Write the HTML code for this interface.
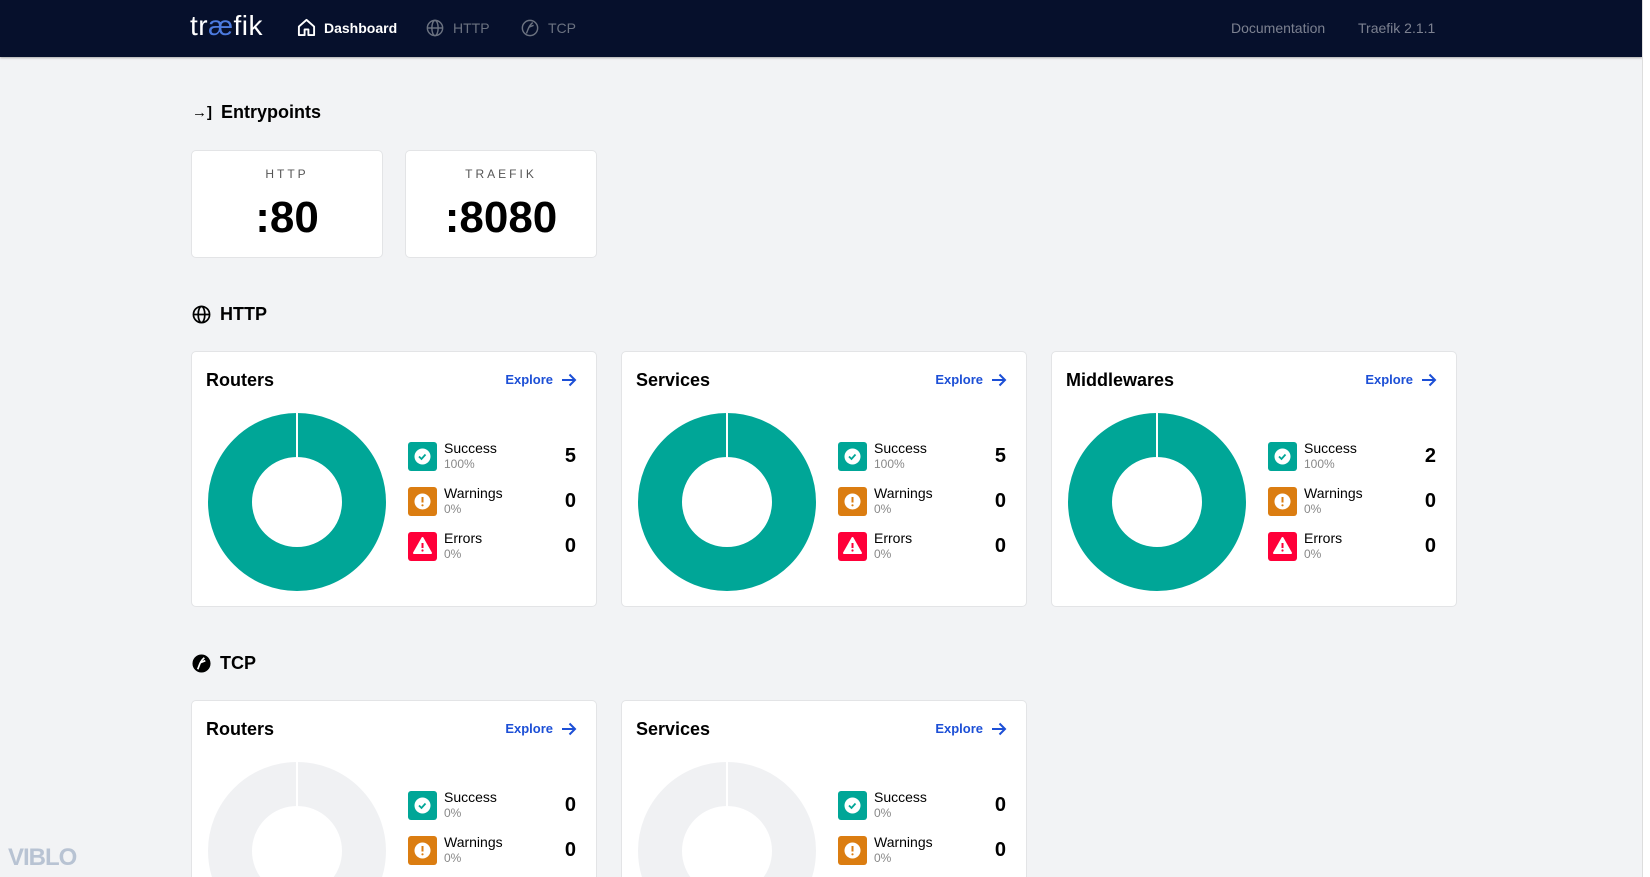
<!DOCTYPE html>
<html style="height:877px;overflow:hidden"><head><meta charset="utf-8"><style>
*{box-sizing:border-box;margin:0;padding:0}
html,body{width:1650px;height:877px;overflow:hidden}
body{background:#f2f3f5;font-family:"Liberation Sans",sans-serif;color:#000;position:relative}
.nav{position:absolute;left:0;top:0;width:1642px;height:57px;background:#06102c;box-shadow:0 1px 2px rgba(0,0,0,.3)}
.rs{position:absolute;left:1642px;top:0;width:8px;height:877px;background:#fff;border-left:1px solid #ddd}
.a{position:absolute;font-size:14px}
.h{position:absolute;font-size:18px;font-weight:bold;display:flex;align-items:center;gap:9px}
.ep{position:absolute;top:150px;width:192px;height:108px;background:#fff;border:1px solid #e3e4e6;border-radius:5px;text-align:center}
.ep .l{position:absolute;top:16px;width:100%;font-size:12px;letter-spacing:3px;color:#555}
.ep .v{position:absolute;top:42px;width:100%;font-size:44px;font-weight:bold}
.card{position:absolute;width:406px;height:256px;background:#fff;border:1px solid #e3e4e6;border-radius:5px;overflow:hidden}
.card.cut{height:177px;border-bottom:none;border-radius:5px 5px 0 0}
.card .t{position:absolute;left:14px;top:18px;font-size:18px;font-weight:bold}
.card .ex{position:absolute;right:19px;top:20px;font-size:13px;color:#1c4fd6;font-weight:bold;display:flex;align-items:center;gap:8px}
.card svg.d{position:absolute;left:15px;top:60px}
.it{position:absolute;left:216px;width:168px;height:30px}
.ic{position:absolute;left:0;top:0;width:29px;height:29px;border-radius:3px}
.it .n{position:absolute;left:36px;top:-2px;font-size:14px}
.it .p{position:absolute;left:36px;top:15px;font-size:12px;color:#888}
.it .c{position:absolute;right:0;top:3px;font-size:20px;font-weight:bold}
</style></head><body>
<div class="nav">
<div class="a" style="left:190px;top:10px;font-size:28px;color:#fff;letter-spacing:0.5px">tr<span style="color:#4c7be0">æ</span>fik</div>
<svg style="position:absolute;left:297px;top:18px" width="19" height="19" viewBox="0 0 20 20"><path d="M2 9 L10 2 L18 9 V18 H12 V12 H8 V18 H2 Z" fill="none" stroke="#fff" stroke-width="2" stroke-linejoin="round"/></svg>
<div class="a" style="left:324px;top:20px;color:#fff;font-weight:bold">Dashboard</div>
<svg style="position:absolute;left:426px;top:19px" width="18" height="18" viewBox="0 0 20 20" fill="none" stroke="#6b7280" stroke-width="1.6"><circle cx="10" cy="10" r="8.5"/><ellipse cx="10" cy="10" rx="3.5" ry="8.5"/><path d="M1.5 10H18.5"/></svg>
<div class="a" style="left:453px;top:20px;color:#6b7280">HTTP</div>
<svg style="position:absolute;left:521px;top:19px" width="18" height="18" viewBox="0 0 20 20" fill="none" stroke="#6b7280" stroke-width="1.6"><circle cx="10" cy="10" r="8.5"/><path d="M6 16 C8 12 8 8 13 4"/><path d="M9 9 L14 7"/></svg>
<div class="a" style="left:548px;top:20px;color:#6b7280">TCP</div>
<div class="a" style="left:1231px;top:20px;color:#7c8190">Documentation</div>
<div class="a" style="left:1358px;top:20px;color:#7c8190">Traefik 2.1.1</div>
</div>
<div class="rs"></div>

<div class="h" style="left:192px;top:102px"><span style="font-size:15px">→]</span>Entrypoints</div>
<div class="ep" style="left:191px"><div class="l">HTTP</div><div class="v">:80</div></div>
<div class="ep" style="left:405px"><div class="l">TRAEFIK</div><div class="v">:8080</div></div>

<div class="h" style="left:192px;top:304px"><svg width="19" height="19" viewBox="0 0 20 20" fill="none" stroke="#000" stroke-width="1.8"><circle cx="10" cy="10" r="8.5"/><ellipse cx="10" cy="10" rx="3.5" ry="8.5"/><path d="M1.5 10H18.5"/></svg>HTTP</div>

<div class="h" style="left:192px;top:653px"><svg width="19" height="19" viewBox="0 0 20 20"><circle cx="10" cy="10" r="9.5" fill="#000"/><path d="M6 16 C8 12 8 8 13 4" stroke="#fff" stroke-width="1.8" fill="none"/><path d="M9 9 L14 7" stroke="#fff" stroke-width="1.8"/></svg>TCP</div>

<div id="c"></div>

<div style="position:absolute;left:8px;top:844px;font-size:24px;font-weight:bold;color:#b8c3d3;letter-spacing:-1px">VIBLO</div>

<script>
function card(x,y,title,vals,pct,empty){
 var col=empty?'#f0f1f3':'#00a697';
 var icons=['#00a697','#db7d11','#ff0039'],names=['Success','Warnings','Errors'];
 var ii=[
 '<svg width="29" height="29"><circle cx="14.5" cy="14.5" r="8" fill="#fff"/><path d="M11 14.5l2.5 2.5 4-4.5" stroke="#00a697" stroke-width="1.8" fill="none"/></svg>',
 '<svg width="29" height="29"><circle cx="14.5" cy="14.5" r="8" fill="#fff"/><path d="M14.5 10v5.5" stroke="#db7d11" stroke-width="2"/><circle cx="14.5" cy="18.3" r="1.1" fill="#db7d11"/></svg>',
 '<svg width="29" height="29"><path d="M14.5 6 L23 21 H6 Z" fill="#fff" stroke="#fff" stroke-linejoin="round" stroke-width="2"/><path d="M14.5 11v5" stroke="#ff0039" stroke-width="2"/><circle cx="14.5" cy="18.5" r="1.1" fill="#ff0039"/></svg>'];
 var s='<div class="card'+(empty?' cut':'')+'" style="left:'+x+'px;top:'+y+'px"><div class="t">'+title+'</div><div class="ex">Explore <svg width="16" height="14" viewBox="0 0 16 14"><path d="M1 7H14M8.5 1.5L14 7 8.5 12.5" stroke="#1c4fd6" stroke-width="2" fill="none"/></svg></div>';
 s+='<svg class="d" width="180" height="180"><circle cx="90" cy="90" r="67" fill="none" stroke="'+col+'" stroke-width="44"/><path d="M90 0V46" stroke="#fff" stroke-width="2"/></svg>';
 for(var i=0;i<vals.length;i++){
  s+='<div class="it" style="top:'+(90+45*i)+'px"><div class="ic" style="background:'+icons[i]+'">'+ii[i]+'</div><div class="n">'+names[i]+'</div><div class="p">'+pct[i]+'</div><div class="c">'+vals[i]+'</div></div>';
 }
 return s+'</div>';
}
var h='';
h+=card(191,351,'Routers',[5,0,0],['100%','0%','0%']);
h+=card(621,351,'Services',[5,0,0],['100%','0%','0%']);
h+=card(1051,351,'Middlewares',[2,0,0],['100%','0%','0%']);
h+=card(191,700,'Routers',[0,0,0],['0%','0%','0%'],1);
h+=card(621,700,'Services',[0,0,0],['0%','0%','0%'],1);
document.getElementById('c').innerHTML=h;
</script>
</body></html>
